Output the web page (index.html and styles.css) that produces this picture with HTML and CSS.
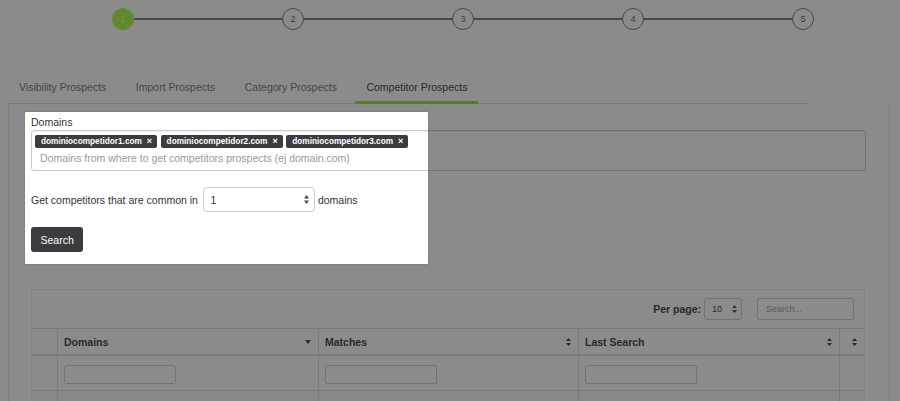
FILE: index.html
```html
<!DOCTYPE html>
<html lang="en">
<head>
<meta charset="utf-8">
<title>Competitor Prospects</title>
<link rel="stylesheet" href="styles.css">
</head>
<body>
<div class="stepper">
  <span class="dot done">1</span><span class="line"></span>
  <span class="dot">2</span><span class="line"></span>
  <span class="dot">3</span><span class="line"></span>
  <span class="dot">4</span><span class="line"></span>
  <span class="dot">5</span>
</div>

<ul class="tabs">
  <li class="tab">Visibility Prospects</li>
  <li class="tab">Import Prospects</li>
  <li class="tab">Category Prospects</li>
  <li class="tab active">Competitor Prospects</li>
</ul>

<div class="panel">
  <div class="label">Domains</div>
  <div class="tag-input">
    <div class="tags">
      <span class="tag">dominiocompetidor1.com<span class="rm">×</span></span>
      <span class="tag">dominiocompetidor2.com<span class="rm">×</span></span>
      <span class="tag">dominiocompetidor3.com<span class="rm">×</span></span>
    </div>
    <div class="placeholder">Domains from where to get competitors prospects (ej domain.com)</div>
  </div>

  <div class="common-row">
    <span>Get competitors that are common in</span>
    <div class="select">
      <span>1</span>
      <svg class="arrows" width="5" height="9" viewBox="0 0 5 9"><path d="M2.5 0L5 3.5H0z M2.5 9L0 5.5h5z"/></svg>
    </div>
    <span>domains</span>
  </div>

  <button class="btn">Search</button>

  <div class="table-wrap">
    <div class="toolbar">
      <span class="pp-label">Per page:</span>
      <div class="pp-select">
        <span>10</span>
        <svg class="arrows" width="5" height="8" viewBox="0 0 5 8"><path d="M2.5 0L5 3H0z M2.5 8L0 5h5z"/></svg>
      </div>
      <div class="search-box">Search...</div>
    </div>
    <table class="grid">
      <colgroup>
        <col class="c-narrow"><col class="c-wide"><col class="c-mid"><col class="c-wide"><col class="c-last">
      </colgroup>
      <thead>
        <tr>
          <th class="first"><div class="th-in"></div></th>
          <th><div class="th-in"><span>Domains</span><svg width="6" height="4" viewBox="0 0 6 4"><path d="M0 0h6L3 4z"/></svg></div></th>
          <th><div class="th-in"><span>Matches</span><svg width="5" height="8" viewBox="0 0 5 8"><path d="M2.5 0L5 3H0z M2.5 8L0 5h5z"/></svg></div></th>
          <th><div class="th-in"><span>Last Search</span><svg width="5" height="8" viewBox="0 0 5 8"><path d="M2.5 0L5 3H0z M2.5 8L0 5h5z"/></svg></div></th>
          <th><div class="th-in end"><svg width="5" height="8" viewBox="0 0 5 8"><path d="M2.5 0L5 3H0z M2.5 8L0 5h5z"/></svg></div></th>
        </tr>
      </thead>
      <tbody>
        <tr class="filters">
          <td class="first"></td>
          <td><div class="filter"></div></td>
          <td><div class="filter"></div></td>
          <td><div class="filter"></div></td>
          <td></td>
        </tr>
        <tr class="empty">
          <td class="first"></td><td></td><td></td><td></td><td></td>
        </tr>
      </tbody>
    </table>
  </div>
</div>

<div class="tour-highlight"></div>
</body>
</html>
```

FILE: styles.css
```css
html, body {
  margin: 0;
  padding: 0;
  background: #fff;
}
body {
  font-family: "Liberation Sans", Arial, sans-serif;
  font-size: 10.5px;
  color: #333;
  position: relative;
  height: 401px;
  overflow: hidden;
}

/* stepper */
.stepper {
  display: flex;
  align-items: center;
  width: 702px;
  margin-left: 112px;
  padding-top: 8px;
}
.dot {
  flex: 0 0 22px;
  height: 22px;
  box-sizing: border-box;
  border: 1.5px solid #747474;
  border-radius: 50%;
  background: #fff;
  color: #555;
  font-size: 8.5px;
  display: flex;
  align-items: center;
  justify-content: center;
}
.dot.done {
  background: #a6f83a;
  border-color: #a6f83a;
  color: #e8ffd0;
}
.line {
  flex: 1;
  height: 2px;
  background: #747474;
}

/* tabs */
.tabs {
  display: flex;
  list-style: none;
  margin: 43px 0 0 8px;
  padding: 0;
  width: 800px;
  border-bottom: 1px solid #ddd;
}
.tab {
  padding: 7px 11px 6px;
  margin-right: 7.5px;
  line-height: 15px;
  border-bottom: 3px solid transparent;
  margin-bottom: -1px;
  color: #707070;
}
.tab.active {
  color: #333;
  border-bottom-color: #92e232;
}

/* panel */
.panel {
  margin-left: 8px;
  width: 882px;
  box-sizing: border-box;
  border-left: 1px solid #e6e6e6;
  border-right: 1px solid #e6e6e6;
  padding: 11px 23px 0 22px;
}
.label {
  line-height: 15px;
}
.tag-input {
  border: 1px solid #ccc;
  border-radius: 3px;
  padding: 4px 3px;
  box-shadow: inset 0 1px 1px rgba(0, 0, 0, 0.06);
}
.tags {
  display: flex;
  gap: 3.5px;
  margin-bottom: 3px;
}
.tag {
  display: inline-flex;
  align-items: center;
  height: 13px;
  padding: 0 5px 0 6px;
  gap: 5px;
  background: #3b3c3f;
  color: #fff;
  font-weight: bold;
  font-size: 8.25px;
  border-radius: 2px;
}
.rm {
  font-size: 9px;
  line-height: 1;
}
.placeholder {
  line-height: 15px;
  padding-left: 5px;
  color: #999;
}

.common-row {
  display: flex;
  align-items: center;
  margin-top: 16px;
  height: 25px;
}
.select {
  width: 112px;
  height: 25px;
  box-sizing: border-box;
  border: 1px solid #ccc;
  border-radius: 4px;
  display: flex;
  align-items: center;
  justify-content: space-between;
  padding: 0 5px 0 6px;
  margin: 0 2.5px 0 5.5px;
  background: #fff;
}
.arrows path { fill: #444; }

.btn {
  display: block;
  margin-top: 15px;
  height: 25px;
  padding: 0 9.5px;
  background: #3b3c40;
  color: #fff;
  border: none;
  border-radius: 3px;
  font: inherit;
  font-size: 10.5px;
}

/* table */
.table-wrap {
  margin-top: 37px;
  width: 834px;
  box-sizing: border-box;
  border: 1px solid #e8e8e8;
  border-bottom: none;
}
.toolbar {
  display: flex;
  justify-content: flex-end;
  align-items: center;
  padding: 8px 10px 8px 0;
}
.pp-label {
  font-weight: bold;
  margin-right: 3px;
}
.pp-select {
  width: 38px;
  height: 22px;
  box-sizing: border-box;
  border: 1px solid #ccc;
  border-radius: 3px;
  display: flex;
  align-items: center;
  justify-content: space-between;
  padding: 0 4px 0 7px;
  font-size: 9px;
}
.search-box {
  margin-left: 15px;
  width: 97px;
  height: 22px;
  box-sizing: border-box;
  border: 1px solid #ccc;
  border-radius: 2px;
  padding-left: 8px;
  display: flex;
  align-items: center;
  color: #999;
  font-size: 9px;
}
.grid {
  width: 100%;
  table-layout: fixed;
  border-collapse: separate;
  border-spacing: 0;
}
.c-narrow { width: 25px; }
.c-wide { width: 261px; }
.c-mid { width: 260px; }
.c-last { width: 25px; }
.grid th, .grid td {
  padding: 0;
  border-left: 1px solid #ddd;
}
.grid th.first, .grid td.first { border-left: none; }
.grid th {
  border-top: 1px solid #ddd;
  border-bottom: 2px solid #ddd;
  text-align: left;
  font-weight: bold;
}
.th-in {
  height: 25px;
  display: flex;
  align-items: center;
  justify-content: space-between;
  padding: 0 7px 0 6px;
}
.th-in.end {
  justify-content: flex-end;
  padding-right: 7px;
}
.th-in svg { fill: #333; }
.filters td {
  padding: 9px 6px 6px;
  border-bottom: 1px solid #ddd;
}
.filter {
  width: 112px;
  height: 19px;
  box-sizing: border-box;
  border: 1px solid #ccc;
  border-radius: 2px;
}
.empty td {
  height: 30px;
  background: #f9f9f9;
}

/* guided tour highlight */
.tour-highlight {
  position: absolute;
  left: 25px;
  top: 112px;
  width: 403px;
  height: 152px;
  border-radius: 1px;
  box-shadow: 0 0 2px rgba(33, 33, 33, 0.3), 0 0 0 9999px rgba(33, 33, 33, 0.52);
  pointer-events: none;
}
```
